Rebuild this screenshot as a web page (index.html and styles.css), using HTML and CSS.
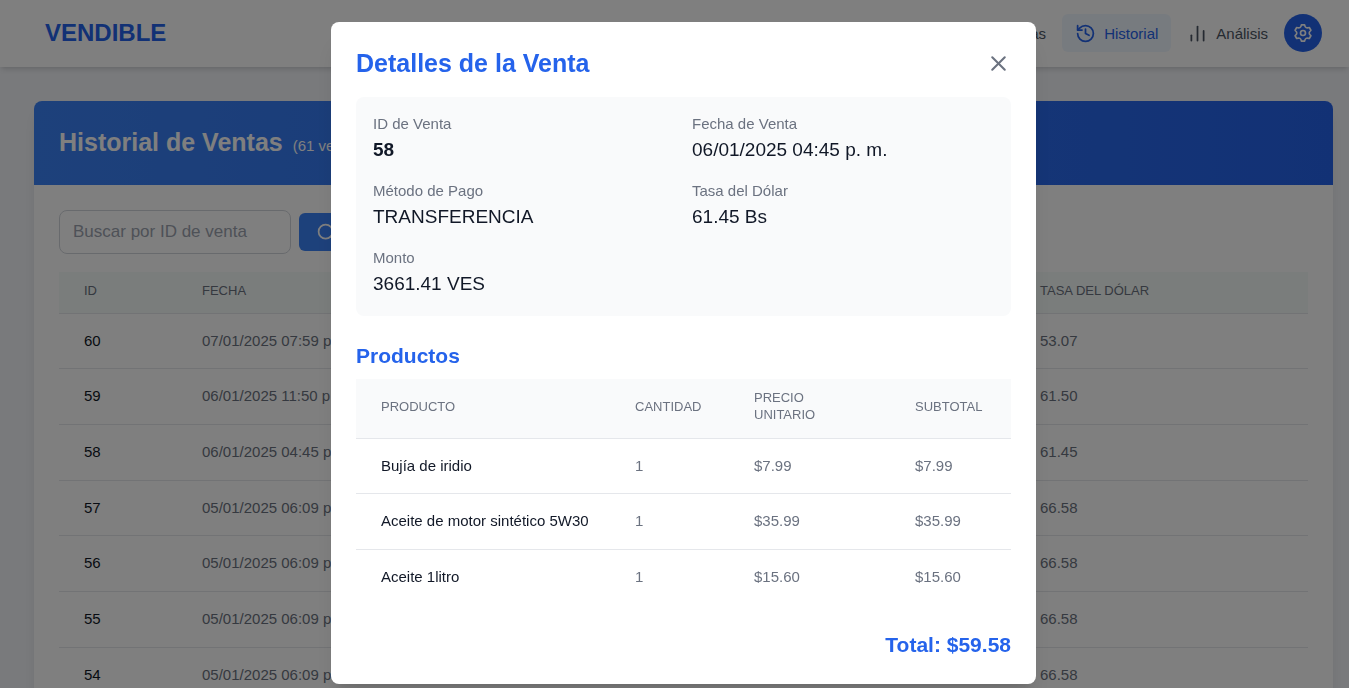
FILE: index.html
```html
<!DOCTYPE html>
<html lang="es">
<head>
<meta charset="utf-8">
<meta name="viewport" content="width=device-width, initial-scale=1">
<title>Vendible - Historial de Ventas</title>
<link rel="stylesheet" href="styles.css">
</head>
<body>
<header class="topbar">
  <a class="brand" href="#">VENDIBLE</a>
  <nav class="nav">
    <a class="nav-link" href="#">Ventas</a>
    <a class="nav-link active" href="#">
      <svg class="icon" viewBox="0 0 24 24"><path d="M3 12a9 9 0 1 0 9-9 9.75 9.75 0 0 0-6.74 2.74L3 8"/><path d="M3 3v5h5"/><path d="M12 7v5l4 2"/></svg>
      Historial
    </a>
    <a class="nav-link" href="#">
      <svg class="icon" viewBox="0 0 24 24"><path d="M19 20V9"/><path d="M12 20V4"/><path d="M5 20v-6"/></svg>
      Análisis
    </a>
    <button class="settings" type="button" aria-label="Configuración">
      <svg class="icon" viewBox="0 0 24 24"><path d="M10.09 2.18H13.91C14.55 5.7 16.19 6.64 19.55 5.44L21.46 8.74C18.73 11.05 18.73 12.95 21.46 15.26L19.55 18.56C16.19 17.36 14.55 18.3 13.91 21.82H10.09C9.45 18.3 7.81 17.36 4.45 18.56L2.54 15.26C5.27 12.95 5.27 11.05 2.54 8.74L4.45 5.44C7.81 6.64 9.45 5.7 10.09 2.18Z"/><circle cx="12" cy="12" r="3"/></svg>
    </button>
  </nav>
</header>

<main class="page">
  <section class="card">
    <div class="card-head">
      <h1 class="card-title">Historial de Ventas</h1>
      <span class="card-count">(61 ventas)</span>
    </div>
    <div class="card-body">
      <form class="search">
        <input class="search-input" type="text" placeholder="Buscar por ID de venta" aria-label="Buscar por ID de venta">
        <button class="search-button" type="button" aria-label="Buscar">
          <svg class="icon" viewBox="0 0 24 24"><circle cx="11" cy="11" r="8"/><path d="m21 21-4.300-4.300"/></svg>
        </button>
      </form>
      <table class="table sales">
        <colgroup><col class="s-id"><col class="s-date"><col class="s-rate"></colgroup>
        <thead><tr><th>ID</th><th>FECHA</th><th>TASA DEL DÓLAR</th></tr></thead>
        <tbody>
          <tr><td>60</td><td>07/01/2025 07:59 p. m.</td><td>53.07</td></tr>
          <tr><td>59</td><td>06/01/2025 11:50 p. m.</td><td>61.50</td></tr>
          <tr><td>58</td><td>06/01/2025 04:45 p. m.</td><td>61.45</td></tr>
          <tr><td>57</td><td>05/01/2025 06:09 p. m.</td><td>66.58</td></tr>
          <tr><td>56</td><td>05/01/2025 06:09 p. m.</td><td>66.58</td></tr>
          <tr><td>55</td><td>05/01/2025 06:09 p. m.</td><td>66.58</td></tr>
          <tr><td>54</td><td>05/01/2025 06:09 p. m.</td><td>66.58</td></tr>
        </tbody>
      </table>
    </div>
  </section>
</main>

<div class="overlay">
  <div class="modal" role="dialog" aria-modal="true" aria-labelledby="modal-title">
    <div class="modal-head">
      <h2 class="modal-title" id="modal-title">Detalles de la Venta</h2>
      <button class="close" type="button" aria-label="Cerrar">
        <svg class="icon" viewBox="0 0 24 24"><path d="M18 6 6 18"/><path d="m6 6 12 12"/></svg>
      </button>
    </div>
    <dl class="info">
      <div><dt>ID de Venta</dt><dd class="strong">58</dd></div>
      <div><dt>Fecha de Venta</dt><dd>06/01/2025 04:45 p. m.</dd></div>
      <div><dt>Método de Pago</dt><dd>TRANSFERENCIA</dd></div>
      <div><dt>Tasa del Dólar</dt><dd>61.45 Bs</dd></div>
      <div><dt>Monto</dt><dd>3661.41 VES</dd></div>
    </dl>
    <h3 class="subtitle">Productos</h3>
    <table class="table products">
      <colgroup><col class="p-name"><col class="p-qty"><col class="p-price"><col class="p-sub"></colgroup>
      <thead><tr><th>PRODUCTO</th><th>CANTIDAD</th><th>PRECIO UNITARIO</th><th>SUBTOTAL</th></tr></thead>
      <tbody>
        <tr><td>Bujía de iridio</td><td>1</td><td>$7.99</td><td>$7.99</td></tr>
        <tr><td>Aceite de motor sintético 5W30</td><td>1</td><td>$35.99</td><td>$35.99</td></tr>
        <tr><td>Aceite 1litro</td><td>1</td><td>$15.60</td><td>$15.60</td></tr>
      </tbody>
    </table>
    <p class="total">Total: $59.58</p>
  </div>
</div>
</body>
</html>
```
FILE: styles.css
```css
* {
  box-sizing: border-box;
}

body {
  margin: 0;
  height: 100vh;
  overflow: hidden;
  background: #f3f5f9;
  color: #111827;
  font-family: "Liberation Sans", Arial, sans-serif;
  font-size: 15px;
  line-height: 21px;
}

h1, h2, h3, p, dl, dd {
  margin: 0;
}

button {
  border: 0;
  padding: 0;
  cursor: pointer;
}

.icon {
  display: block;
  width: 21px;
  height: 21px;
  fill: none;
  stroke: currentColor;
  stroke-width: 2;
  stroke-linecap: round;
  stroke-linejoin: round;
}

.topbar {
  position: relative;
  display: flex;
  align-items: center;
  justify-content: space-between;
  height: 67px;
  padding: 0 27px 1px 45px;
  background: #fff;
  box-shadow: 0 4px 6px -1px rgba(0, 0, 0, 0.1), 0 2px 4px -2px rgba(0, 0, 0, 0.1);
}

.brand {
  color: #2563eb;
  font-size: 24px;
  font-weight: 700;
  line-height: 34px;
  text-decoration: none;
}

.nav {
  display: flex;
  align-items: center;
}

.nav-link {
  display: flex;
  align-items: center;
  gap: 8px;
  height: 38px;
  padding: 0 16px;
  border-radius: 6px;
  color: #4b5563;
  text-decoration: none;
}

.nav-link.active {
  padding: 0 13px;
  background: #eff6ff;
  color: #2563eb;
}

.settings {
  display: grid;
  place-items: center;
  width: 38px;
  height: 38px;
  border-radius: 50%;
  background: #2563eb;
  color: #fff;
}

.settings .icon {
  width: 20px;
  height: 20px;
}

.page {
  padding: 34px 16px 34px 34px;
}

.card {
  overflow: hidden;
  border-radius: 8px;
  background: #fff;
  box-shadow: 0 10px 15px -3px rgba(0, 0, 0, 0.1);
}

.card-head {
  display: flex;
  align-items: baseline;
  gap: 10px;
  padding: 24px 25px 26px;
  background: linear-gradient(to right, #3b82f6, #2563eb);
  color: #fff;
}

.card-title {
  font-size: 25px;
  line-height: 34px;
}

.card-body {
  padding: 25px;
}

.search {
  display: flex;
  align-items: center;
  gap: 8px;
  margin-bottom: 18px;
}

.search-input {
  width: 232px;
  height: 44px;
  padding: 0 13px;
  border: 1px solid #d1d5db;
  border-radius: 8px;
  background: #fff;
  font: inherit;
  font-size: 17px;
}

.search-input::placeholder {
  color: #9ca3af;
}

.search-button {
  height: 38px;
  padding: 0 17px;
  border-radius: 6px;
  background: #3b82f6;
  color: #fff;
}

.table {
  width: 100%;
  border-spacing: 0;
  table-layout: fixed;
}

.table th {
  padding: 10px 25px 14px;
  border-bottom: 1px solid #e5e7eb;
  background: #f9fafb;
  color: #6b7280;
  font-size: 13px;
  font-weight: 400;
  line-height: 17px;
  text-align: left;
}

.table td {
  padding: 16px 25px 18px;
  color: #6b7280;
  white-space: nowrap;
}

.table tr:nth-child(3n + 1) td {
  padding-bottom: 17px;
}

.table td:first-child {
  color: #111827;
}

.table tr + tr td {
  border-top: 1px solid #e5e7eb;
}

.sales th {
  background: #f5faf8;
}

.s-id {
  width: 118px;
}

.s-rate {
  width: 293px;
}

.overlay {
  position: fixed;
  inset: 0;
  display: flex;
  align-items: flex-start;
  justify-content: center;
  padding: 22px 0 0 18px;
  background: rgba(0, 0, 0, 0.5);
}

.modal {
  width: 100%;
  max-width: 705px;
  padding: 25px;
  border-radius: 8px;
  background: #fff;
  box-shadow: 0 20px 25px -5px rgba(0, 0, 0, 0.1), 0 8px 10px -6px rgba(0, 0, 0, 0.1);
}

.modal-head {
  display: flex;
  align-items: center;
  justify-content: space-between;
  margin-bottom: 18px;
}

.modal-title {
  color: #2563eb;
  font-size: 25px;
  line-height: 32px;
}

.close {
  background: none;
  color: #6b7280;
}

.close .icon {
  width: 25px;
  height: 25px;
}

.info {
  display: grid;
  grid-template-columns: 1fr 1fr;
  gap: 16px 17px;
  margin-bottom: 25px;
  padding: 17px;
  border-radius: 8px;
  background: #f9fafb;
}

.info dt {
  color: #6b7280;
  line-height: 20px;
}

.info dd {
  font-size: 19px;
  line-height: 31px;
}

.info .strong {
  font-weight: 700;
}

.subtitle {
  margin-bottom: 8px;
  color: #2563eb;
  font-size: 21px;
  line-height: 30px;
}

.products {
  margin-bottom: 25px;
}

.p-qty {
  width: 119px;
}

.p-price {
  width: 161px;
}

.p-sub {
  width: 121px;
}

.products th {
  padding-bottom: 15px;
}

.total {
  color: #2563eb;
  font-size: 21px;
  font-weight: 700;
  line-height: 29px;
  text-align: right;
}
```
